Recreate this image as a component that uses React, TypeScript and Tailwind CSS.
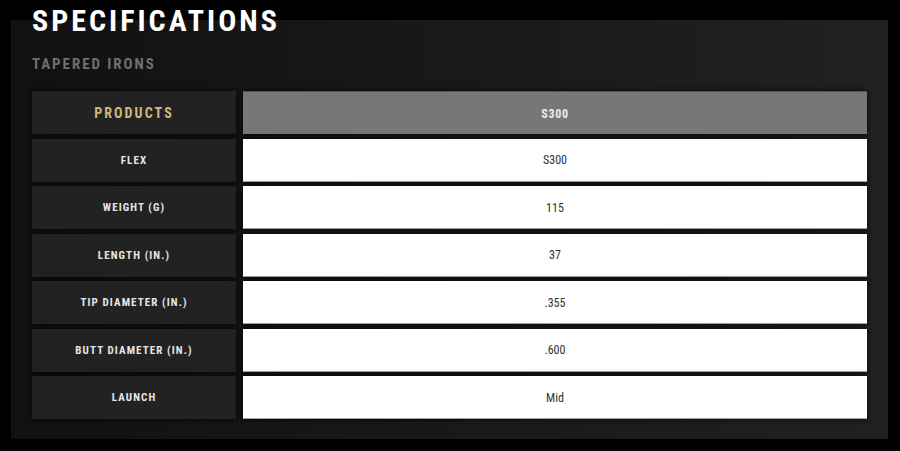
import React from 'react';

const rows: [string, string][] = [
  ['FLEX', 'S300'],
  ['WEIGHT (G)', '115'],
  ['LENGTH (IN.)', '37'],
  ['TIP DIAMETER (IN.)', '.355'],
  ['BUTT DIAMETER (IN.)', '.600'],
  ['LAUNCH', 'Mid'],
];

const font = "font-['Roboto',_'Liberation_Sans',_sans-serif]";

const App: React.FC = () => {
  return (
    <div className={`w-[900px] h-[451px] bg-black pl-[11px] pt-[20px] overflow-hidden ${font}`}>
      <div className="flow-root w-[877px] h-[419px] bg-gradient-to-r from-[#111111] to-[#212121] px-[21px]">
        <h1 className="-mt-[14px] text-[30px] leading-[30px] font-bold text-white tracking-[0.1em] font-stretch-condensed">
          SPECIFICATIONS
        </h1>
        <h2 className="mt-[18px] text-[15px] leading-[20px] font-bold text-[#6f6f6f] tracking-[0.13em] font-stretch-condensed">
          TAPERED IRONS
        </h2>

        {/* spec table */}
        <div className="mt-[17px] w-[835px] flex flex-col gap-[4.5px]">
          <div className="flex h-[43px] gap-[7px]">
            <div className="w-[204px] pt-[2px] flex items-center justify-center bg-[#222222] shadow-[0_0_6px_rgba(0,0,0,0.8)]">
              <span className="text-[14px] font-bold tracking-[0.15em] text-[#d2b87c] font-stretch-condensed">PRODUCTS</span>
            </div>
            <div className="flex-1 pt-[2px] flex items-center justify-center bg-[#777777] border-t border-[#555555] shadow-[0_0_6px_rgba(0,0,0,0.8)]">
              <span className="text-[12px] font-bold tracking-[0.06em] text-[#ececec] font-stretch-condensed">S300</span>
            </div>
          </div>
          {rows.map(([label, value]) => (
            <div key={label} className="flex h-[43px] gap-[7px]">
              <div className="w-[204px] pt-[2px] flex items-center justify-center bg-[#222222] shadow-[0_0_6px_rgba(0,0,0,0.8)]">
                <span className="text-[11px] font-bold tracking-[0.1em] text-[#e6e6e6] font-stretch-condensed">{label}</span>
              </div>
              <div className="flex-1 pt-[1px] flex items-center justify-center bg-white border-b-[1.5px] border-[#a5a5a5] shadow-[0_0_6px_rgba(0,0,0,0.8)]">
                <span className="text-[12px] text-[#333333] font-stretch-condensed">{value}</span>
              </div>
            </div>
          ))}
        </div>
      </div>
    </div>
  );
};

export default App;
